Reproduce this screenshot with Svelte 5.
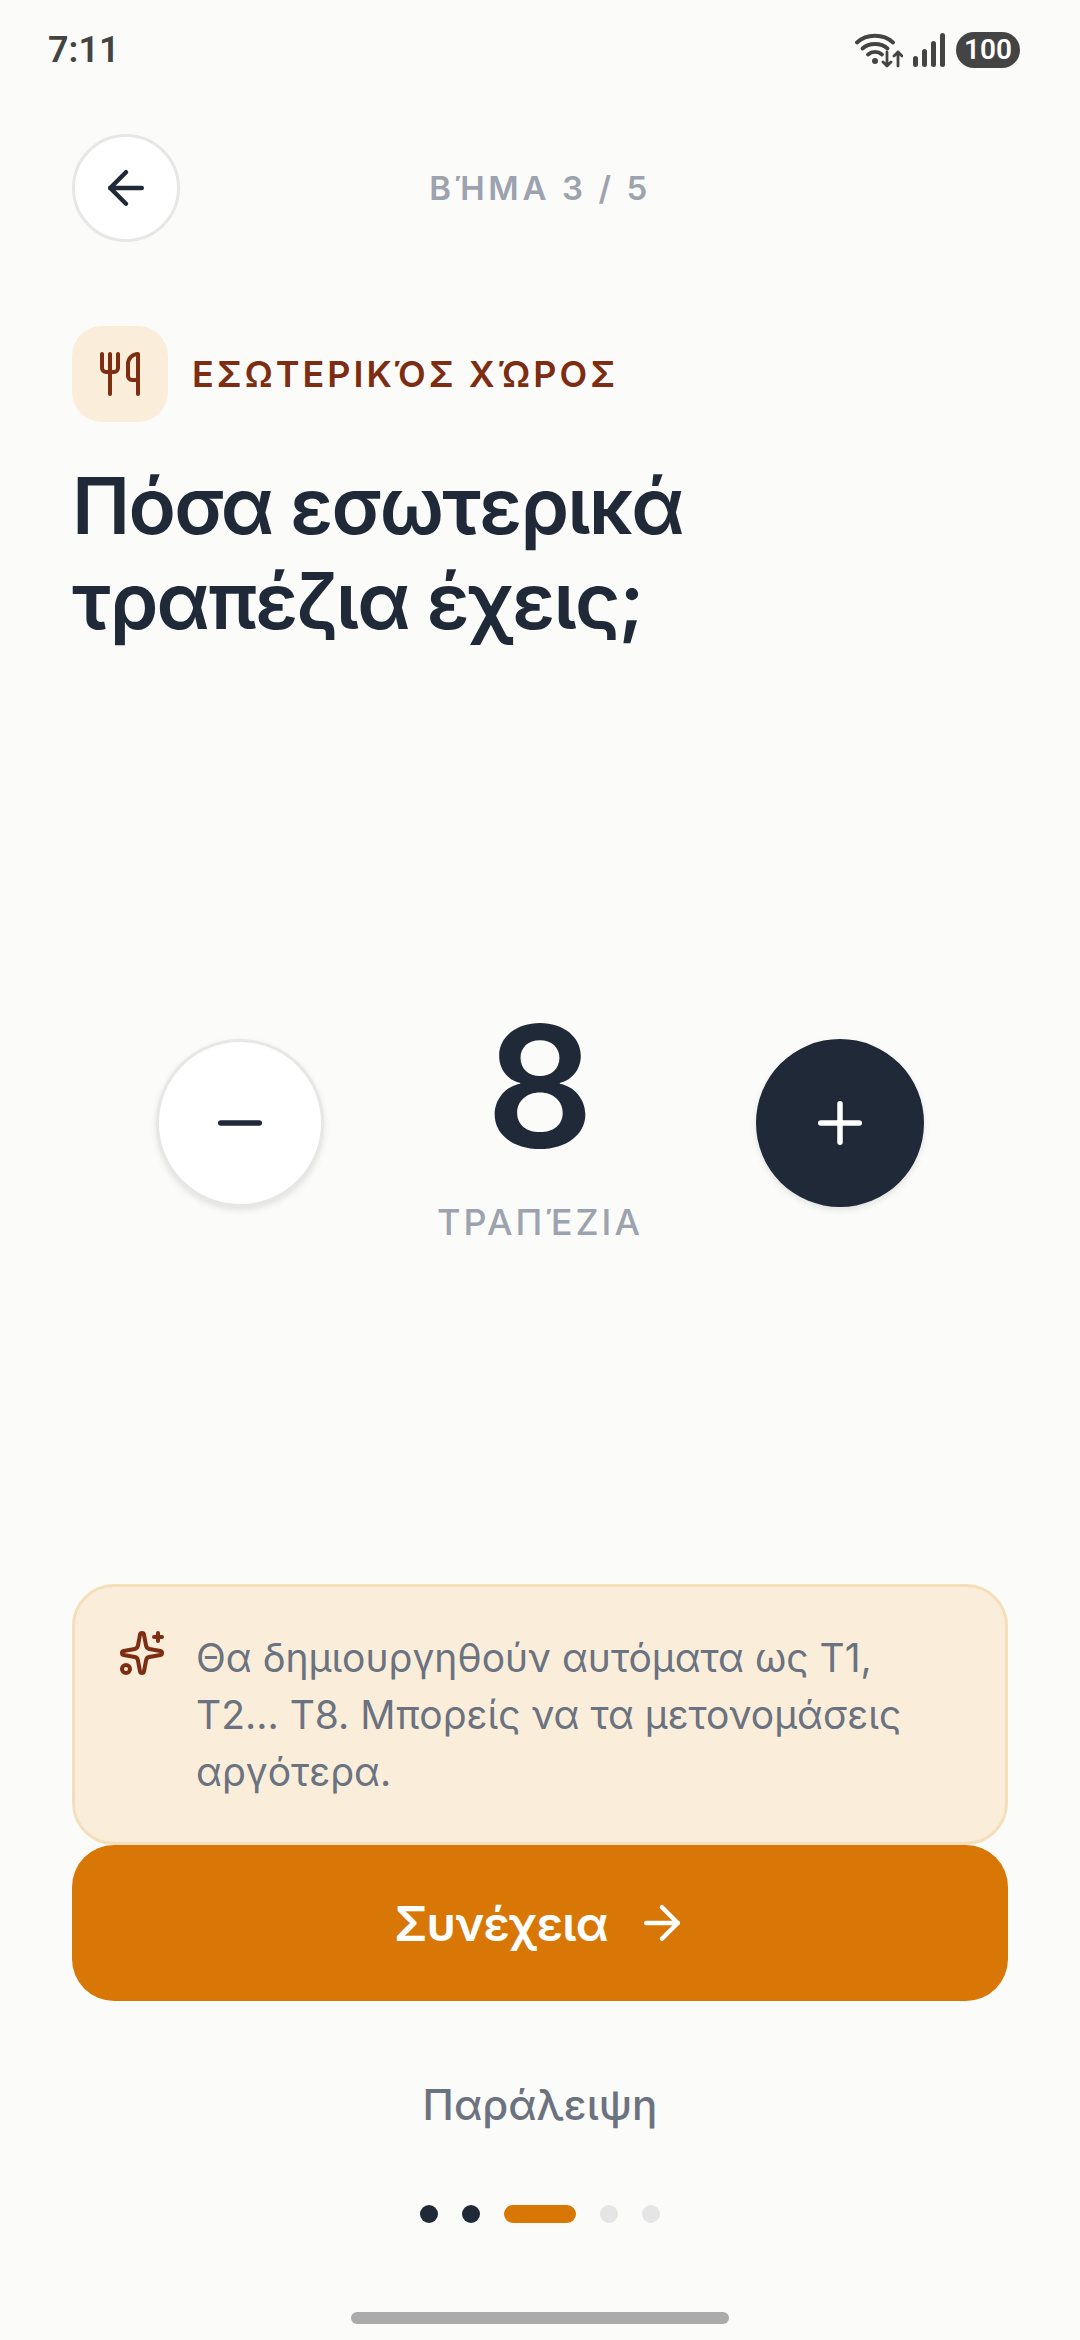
<script lang="ts">
	const count = 8;
	const steps = ['done', 'done', 'active', 'todo', 'todo'];
</script>

<div class="screen">
	<div class="status">
		<span class="time">7:11</span>
		<div class="status-icons">
			<svg class="wifi" width="48" height="36" viewBox="0 0 48 36" fill="none" stroke="#444" stroke-linecap="round" stroke-linejoin="round">
				<path d="M2 10.500C11.500 1.500 28.500 1.500 38 10.500" stroke-width="3.800" />
				<path d="M7.500 16.500C14 10.500 26 10.500 32.500 16.500" stroke-width="3.800" />
				<path d="M13 22.500C17 19 23 19 27 22.500" stroke-width="3.800" />
				<circle cx="20" cy="29" r="3" fill="#444" stroke="none" />
				<path d="M32 20v14M28 30l4 4 4-4M43 34V20M39 24l4-4 4 4" stroke-width="2.800" />
			</svg>
			<svg class="signal" width="33" height="34" viewBox="0 0 33 34" fill="#444">
				<rect x="0" y="23" width="5" height="11" rx="2.500" />
				<rect x="9" y="16" width="5" height="18" rx="2.500" />
				<rect x="18" y="8" width="5" height="26" rx="2.500" />
				<rect x="27" y="0" width="5" height="34" rx="2.500" />
			</svg>
			<span class="battery">100</span>
		</div>
	</div>

	<div class="top">
		<button class="back" aria-label="Πίσω">
			<svg width="54" height="54" viewBox="0 0 24 24" fill="none" stroke="#1f2937" stroke-width="2" stroke-linecap="round" stroke-linejoin="round">
				<path d="m12 19-7-7 7-7" />
				<path d="M19 12H5" />
			</svg>
		</button>
		<span class="step">ΒΉΜΑ 3 / 5</span>
	</div>

	<div class="section">
		<div class="icon-box">
			<svg width="48" height="48" viewBox="0 0 24 24" fill="none" stroke="#7c2d12" stroke-width="2" stroke-linecap="round" stroke-linejoin="round">
				<path d="M3 2v7c0 1.100.9 2 2 2h4a2 2 0 0 0 2-2V2" />
				<path d="M7 2v20" />
				<path d="M21 15V2a5 5 0 0 0-5 5v6c0 1.100.9 2 2 2h3Zm0 0v7" />
			</svg>
		</div>
		<span class="section-label">ΕΣΩΤΕΡΙΚΌΣ ΧΏΡΟΣ</span>
	</div>

	<h1>Πόσα εσωτερικά<br />τραπέζια έχεις;</h1>

	<div class="stepper">
		<button class="round minus" aria-label="Λιγότερα">
			<svg width="66" height="66" viewBox="0 0 24 24" fill="none" stroke="#1f2937" stroke-width="2" stroke-linecap="round">
				<path d="M5 12h14" />
			</svg>
		</button>
		<div class="count">
			<span class="number">{count}</span>
			<span class="unit">ΤΡΑΠΈΖΙΑ</span>
		</div>
		<button class="round plus" aria-label="Περισσότερα">
			<svg width="66" height="66" viewBox="0 0 24 24" fill="none" stroke="#fff" stroke-width="2" stroke-linecap="round">
				<path d="M5 12h14" />
				<path d="M12 5v14" />
			</svg>
		</button>
	</div>

	<div class="note">
		<svg class="sparkles" width="48" height="48" viewBox="0 0 24 24" fill="none" stroke="#7c2d12" stroke-width="2" stroke-linecap="round" stroke-linejoin="round">
			<path d="M11.017 2.814a1 1 0 0 1 1.966 0l1.051 5.558a2 2 0 0 0 1.594 1.594l5.558 1.051a1 1 0 0 1 0 1.966l-5.558 1.051a2 2 0 0 0-1.594 1.594l-1.051 5.558a1 1 0 0 1-1.966 0l-1.051-5.558a2 2 0 0 0-1.594-1.594l-5.558-1.051a1 1 0 0 1 0-1.966l5.558-1.051a2 2 0 0 0 1.594-1.594z" />
			<path d="M20 2v4" />
			<path d="M22 4h-4" />
			<circle cx="4" cy="20" r="2" />
		</svg>
		<p>Θα δημιουργηθούν αυτόματα ως Τ1, Τ2... Τ8. Μπορείς να τα μετονομάσεις αργότερα.</p>
	</div>

	<button class="next">
		<span>Συνέχεια</span>
		<svg width="54" height="54" viewBox="0 0 24 24" fill="none" stroke="#fff" stroke-width="2" stroke-linecap="round" stroke-linejoin="round">
			<path d="M5 12h14" />
			<path d="m12 5 7 7-7 7" />
		</svg>
	</button>

	<button class="skip">Παράλειψη</button>

	<div class="dots">
		{#each steps as s}
			<span class="dot {s}"></span>
		{/each}
	</div>

	<div class="home-bar"></div>
</div>

<style>
	:global(body) {
		margin: 0;
		background: #fbfbf9;
	}

	.screen {
		width: 1080px;
		height: 2340px;
		display: flex;
		flex-direction: column;
		background: #fbfbf9;
		font-family: Inter, 'Noto Sans', sans-serif;
		overflow: hidden;
	}

	button {
		font-family: inherit;
		border: none;
		padding: 0;
		background: none;
	}

	.status {
		height: 100px;
		padding: 0 60px 0 48px;
		display: flex;
		align-items: center;
		justify-content: space-between;
		flex-shrink: 0;
	}

	.time {
		font-family: Roboto, sans-serif;
		font-size: 36px;
		font-weight: 600;
		color: #444;
	}

	.status-icons {
		display: flex;
		align-items: center;
		gap: 10px;
	}

	.battery {
		width: 64px;
		height: 36px;
		border-radius: 18px;
		background: #444;
		color: #fff;
		font-family: Roboto, sans-serif;
		font-size: 28px;
		font-weight: 600;
		line-height: 36px;
		text-align: center;
	}

	.top {
		display: grid;
		grid-template-columns: 108px 1fr 108px;
		align-items: center;
		padding: 0 72px;
		margin-top: 34px;
	}

	.back {
		width: 108px;
		height: 108px;
		border-radius: 50%;
		background: #fff;
		border: 3px solid #e7e7e5;
		display: flex;
		align-items: center;
		justify-content: center;
		box-sizing: border-box;
	}

	.step {
		font-size: 33px;
		font-weight: 600;
		letter-spacing: 3.600px;
		color: #9ca3af;
		text-align: center;
	}

	.section {
		display: flex;
		align-items: center;
		gap: 24px;
		padding: 0 72px;
		margin-top: 84px;
	}

	.icon-box {
		width: 96px;
		height: 96px;
		border-radius: 30px;
		background: #faeedb;
		display: flex;
		align-items: center;
		justify-content: center;
	}

	.section-label {
		font-size: 36px;
		font-weight: 600;
		letter-spacing: 3px;
		color: #7c2d12;
	}

	h1 {
		margin: 36px 72px 0;
		font-size: 78px;
		font-weight: 600;
		line-height: 95px;
		letter-spacing: -1.750px;
		color: #1f2937;
	}

	.stepper {
		flex: 1;
		display: flex;
		align-items: center;
		justify-content: center;
		gap: 48px;
		padding-top: 13px;
	}

	.round {
		width: 168px;
		height: 168px;
		border-radius: 50%;
		display: flex;
		align-items: center;
		justify-content: center;
		box-sizing: border-box;
		flex-shrink: 0;
	}

	.minus {
		background: #fff;
		border: 3px solid #e7e7e5;
		box-shadow: 0 3px 6px rgba(0, 0, 0, 0.1);
	}

	.plus {
		background: #1f2937;
		box-shadow: 0 3px 6px rgba(0, 0, 0, 0.1);
	}

	.count {
		width: 336px;
		display: flex;
		flex-direction: column;
		align-items: center;
	}

	.number {
		font-size: 168px;
		font-weight: 600;
		line-height: 168px;
		color: #1f2937;
	}

	.unit {
		font-size: 36px;
		font-weight: 500;
		line-height: 44px;
		letter-spacing: 3px;
		color: #9ca3af;
		margin-top: 30px;
	}

	.note {
		margin: 0 72px;
		padding: 42px 45px 42px 43px;
		display: flex;
		gap: 30px;
		background: #faeedb;
		border: 3px solid #f5dfbb;
		border-radius: 42px;
	}

	.sparkles {
		flex-shrink: 0;
	}

	.note p {
		margin: 0;
		font-size: 39px;
		line-height: 57px;
		color: #6b7280;
	}

	.next {
		margin: 0 72px;
		height: 156px;
		flex-shrink: 0;
		border-radius: 42px;
		background: #d97706;
		color: #fff;
		font-size: 48px;
		font-weight: 600;
		letter-spacing: -0.800px;
		display: flex;
		align-items: center;
		justify-content: center;
		gap: 27px;
		padding-left: 3px;
	}

	.skip {
		margin-top: 78px;
		font-size: 42px;
		font-weight: 500;
		color: #6b7280;
		text-align: center;
	}

	.dots {
		display: flex;
		justify-content: center;
		gap: 24px;
		margin-top: 75px;
	}

	.dot {
		width: 18px;
		height: 18px;
		border-radius: 9px;
	}

	.dot.done {
		background: #1f2937;
	}

	.dot.active {
		width: 72px;
		background: #d97706;
	}

	.dot.todo {
		background: #e5e5e5;
	}

	.home-bar {
		width: 378px;
		height: 12px;
		border-radius: 6px;
		background: #ababab;
		margin: 89px auto 16px;
	}
</style>
